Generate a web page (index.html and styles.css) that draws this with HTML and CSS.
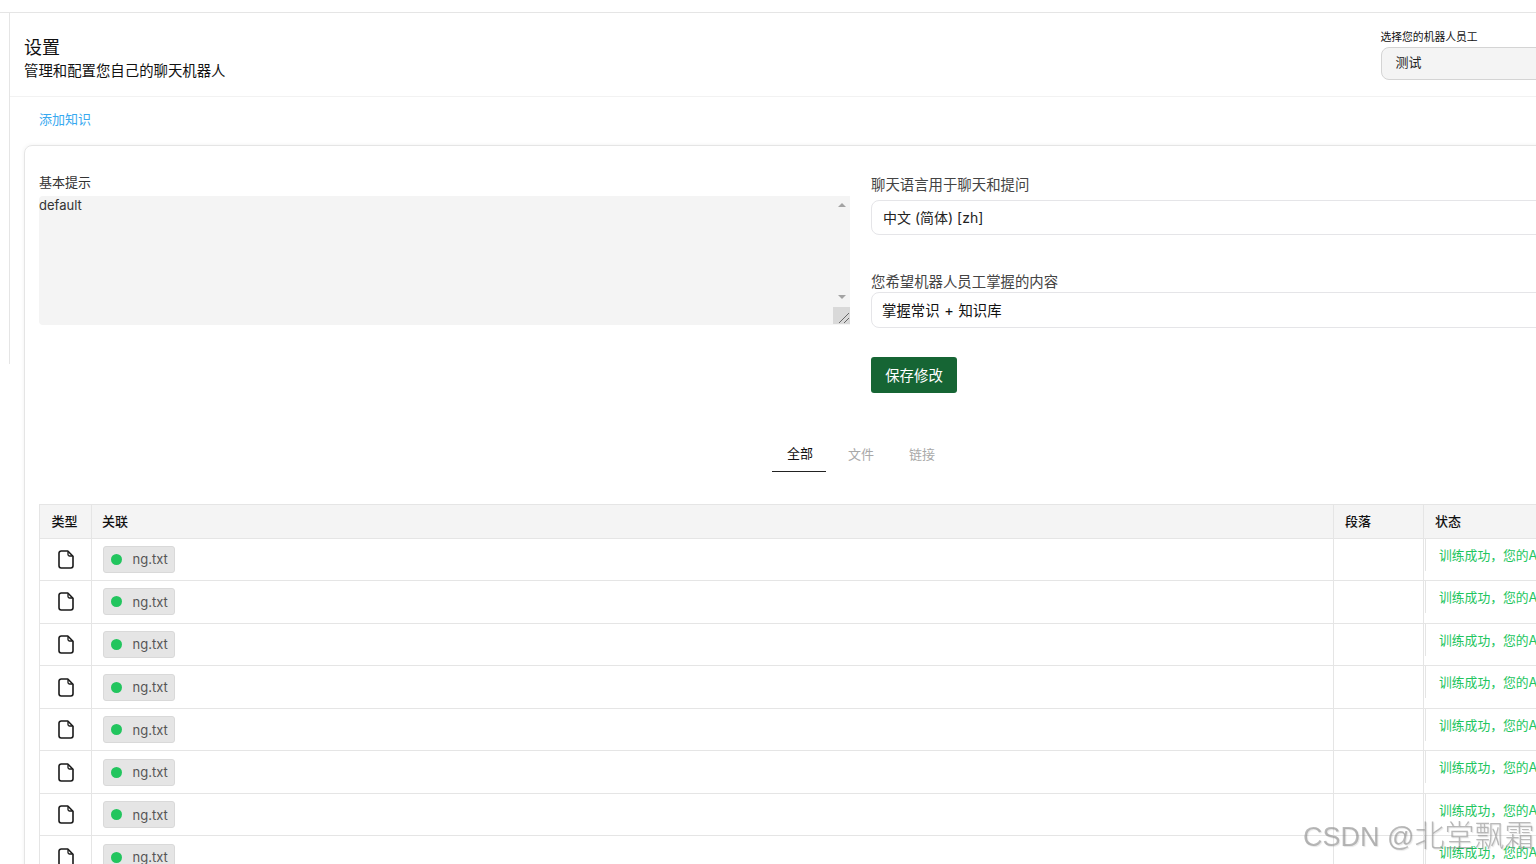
FILE: index.html
```html
<!DOCTYPE html>
<html lang="zh">
<head>
<meta charset="utf-8">
<title>设置</title>
<link rel="stylesheet" href="styles.css">
</head>
<body>
<svg class="defs" width="0" height="0" aria-hidden="true"><defs>
  <symbol id="file-icon" viewBox="0 0 16 19"><path d="M3.2 1H9.8L15 6.2V15.8A2.2 2.2 0 0 1 12.8 18H3.2A2.2 2.2 0 0 1 1 15.8V3.2A2.2 2.2 0 0 1 3.2 1Z" fill="none" stroke="#1a1a1a" stroke-width="1.6" stroke-linejoin="round"/><path d="M10 1.4V4.4A1.6 1.6 0 0 0 11.6 6H14.6" fill="none" stroke="#1a1a1a" stroke-width="1.3"/></symbol>
</defs></svg>
<div class="page">
  <div class="topbar"></div>
  <div class="shell">
    <aside class="rail"></aside>
    <main class="main">
      <header class="head">
        <div class="head-text">
          <h1 class="title">设置</h1>
          <p class="subtitle">管理和配置您自己的聊天机器人</p>
        </div>
        <div class="picker">
          <label class="picker-label">选择您的机器人员工</label>
          <div class="picker-box">测试</div>
        </div>
      </header>
      <nav class="subnav"><a class="subnav-link">添加知识</a></nav>
      <section class="card">
        <div class="form">
          <div class="form-left">
            <label class="label-left">基本提示</label>
            <div class="prompt">
              <span class="prompt-text">default</span>
              <div class="scroll">
                <span class="arrow arrow-up"></span>
                <span class="arrow arrow-down"></span>
                <span class="grip"><svg width="17" height="17" viewBox="0 0 17 17"><path d="M6 16 16 6M11 16l5-5" stroke="#666" stroke-width="1" fill="none"/></svg></span>
              </div>
            </div>
          </div>
          <div class="form-right">
            <label class="label-right">聊天语言用于聊天和提问</label>
            <div class="field field-lang">中文 (简体) [zh]</div>
            <label class="label-right label-second">您希望机器人员工掌握的内容</label>
            <div class="field field-know">掌握常识 + 知识库</div>
            <button class="save">保存修改</button>
          </div>
        </div>
        <div class="tabs">
          <span class="tab tab-active">全部</span>
          <span class="tab">文件</span>
          <span class="tab">链接</span>
        </div>
        <div class="table-wrap">
          <table class="table">
            <colgroup><col class="c-type"><col class="c-link"><col class="c-para"><col class="c-state"></colgroup>
            <thead>
              <tr><th class="th-type">类型</th><th class="th-link">关联</th><th>段落</th><th>状态</th></tr>
            </thead>
            <tbody>
              <tr><td class="td-type"><svg class="file"><use href="#file-icon"/></svg></td><td><span class="badge"><i class="dot"></i>ng.txt</span></td><td></td><td class="td-state"><div class="state">训练成功，您的AI机器人员工已经掌握了这些知识</div></td></tr>
              <tr><td class="td-type"><svg class="file"><use href="#file-icon"/></svg></td><td><span class="badge"><i class="dot"></i>ng.txt</span></td><td></td><td class="td-state"><div class="state">训练成功，您的AI机器人员工已经掌握了这些知识</div></td></tr>
              <tr><td class="td-type"><svg class="file"><use href="#file-icon"/></svg></td><td><span class="badge"><i class="dot"></i>ng.txt</span></td><td></td><td class="td-state"><div class="state">训练成功，您的AI机器人员工已经掌握了这些知识</div></td></tr>
              <tr><td class="td-type"><svg class="file"><use href="#file-icon"/></svg></td><td><span class="badge"><i class="dot"></i>ng.txt</span></td><td></td><td class="td-state"><div class="state">训练成功，您的AI机器人员工已经掌握了这些知识</div></td></tr>
              <tr><td class="td-type"><svg class="file"><use href="#file-icon"/></svg></td><td><span class="badge"><i class="dot"></i>ng.txt</span></td><td></td><td class="td-state"><div class="state">训练成功，您的AI机器人员工已经掌握了这些知识</div></td></tr>
              <tr><td class="td-type"><svg class="file"><use href="#file-icon"/></svg></td><td><span class="badge"><i class="dot"></i>ng.txt</span></td><td></td><td class="td-state"><div class="state">训练成功，您的AI机器人员工已经掌握了这些知识</div></td></tr>
              <tr><td class="td-type"><svg class="file"><use href="#file-icon"/></svg></td><td><span class="badge"><i class="dot"></i>ng.txt</span></td><td></td><td class="td-state"><div class="state">训练成功，您的AI机器人员工已经掌握了这些知识</div></td></tr>
              <tr><td class="td-type"><svg class="file"><use href="#file-icon"/></svg></td><td><span class="badge"><i class="dot"></i>ng.txt</span></td><td></td><td class="td-state"><div class="state">训练成功，您的AI机器人员工已经掌握了这些知识</div></td></tr>
            </tbody>
          </table>
        </div>
      </section>
    </main>
  </div>
  <div class="watermark">CSDN @<span class="wm-name">北堂飘霜</span></div>
</div>
</body>
</html>
```
FILE: styles.css
```css
* { box-sizing: border-box; }
html, body { margin: 0; height: 100%; overflow: hidden; background: #fff; }
body { font-family: Inter, "Noto Sans CJK SC", sans-serif; color: #1f1f1f; }
.defs { position: absolute; }
.page { position: relative; width: 1536px; height: 864px; overflow: hidden; }
.topbar { height: 13px; border-bottom: 1px solid #e5e5e5; }
.shell { display: flex; align-items: flex-start; width: 1900px; }
.rail { flex: 0 0 10px; height: 351px; border-right: 1px solid #e5e5e5; }
.main { flex: 1; min-width: 0; }
.head { display: flex; height: 84px; border-bottom: 1px solid #f2f2f2; padding: 0 0 0 14px; }
.head-text { padding-top: 24px; }
.title { margin: 0; font-size: 18px; line-height: 21px; font-weight: 400; color: #111; }
.subtitle { margin: 3px 0 0; font-size: 14.4px; line-height: 20px; color: #111; }
.picker { margin-left: 1156px; padding-top: 16px; }
.picker-label { display: block; margin-left: -1px; font-size: 10.8px; line-height: 14px; color: #111; padding-top: 2px; }
.picker-box { width: 400px; height: 33px; margin-top: 2px; padding: 0 13px; line-height: 29px; font-size: 13px; color: #222; background: #f4f4f4; border: 1px solid #d4d4d4; border-radius: 8px; }
.subnav { height: 48px; padding: 11px 0 0 29px; }
.subnav-link { font-size: 13px; line-height: 16px; color: #38a9f0; }
.card { margin-left: 14px; border: 1px solid #e5e5e5; border-radius: 8px; padding: 0 14px; box-shadow: 0 0 4px rgba(0,0,0,.06); }
.form { display: grid; grid-template-columns: 811px 1fr; column-gap: 21px; height: 286px; }
.form-left { padding-top: 28px; }
.label-left { display: block; font-size: 13px; line-height: 16px; color: #333; }
.prompt { position: relative; height: 129px; margin-top: 6px; padding-top: 1px; background: #f4f4f4; border-radius: 4px 0 0 4px; overflow: hidden; }
.prompt-text { font-size: 13px; line-height: 16px; color: #333; display: block; }
.scroll { position: absolute; top: 0; right: 0; bottom: 0; width: 17px; }
.arrow { position: absolute; left: 5px; width: 0; height: 0; border-left: 4px solid transparent; border-right: 4px solid transparent; }
.arrow-up { top: 7px; border-bottom: 4px solid #a3a3a3; }
.arrow-down { top: 99px; border-top: 4px solid #a3a3a3; }
.grip { position: absolute; left: 0; bottom: 1px; width: 17px; height: 17px; background: #d9d9d9; display: block; }
.grip svg { display: block; }
.form-right { padding-top: 30px; display: flex; flex-direction: column; align-items: flex-start; }
.label-right { font-size: 14.4px; line-height: 18px; color: #444; }
.label-second { margin-top: 38px; }
.field { width: 100%; border: 1px solid #e5e5e8; border-radius: 8px; padding: 0 11px; color: #222; }
.field-lang { height: 35px; margin-top: 6px; font-size: 14px; line-height: 33px; }
.field-know { height: 36px; margin-top: 1px; padding-left: 10px; font-size: 14.4px; line-height: 36px; color: #111; word-spacing: .6px; }
.save { margin-top: 29px; width: 86px; height: 36px; padding: 2px 0 0; border: 0; border-radius: 3px; background: #166534; color: #fff; font: 14.4px/34px Inter, "Noto Sans CJK SC", sans-serif; }
.tabs { display: flex; padding-left: 733px; height: 33px; margin-top: 7px; }
.tab { width: 54px; margin-right: 7px; padding-left: 2px; text-align: center; font-size: 13px; line-height: 16px; padding-top: 7px; color: #a8a8a8; height: 33px; }
.tab-active { color: #111; padding-top: 6px; border-bottom: 1px solid #222; }
.table-wrap { margin-top: 32px; width: 1900px; }
.table { border-collapse: collapse; table-layout: fixed; width: 1700px; border: 1px solid #e5e5e5; font-size: 13px; }
.c-type { width: 52px; } .c-link { width: 1242px; } .c-para { width: 90px; } .c-state { width: 316px; }
th { height: 33.6px; padding: 0 11px 2px; text-align: left; font-size: 13px; font-weight: 500; color: #111; background: #f4f4f4; border: 1px solid #e5e5e5; }
.table thead th.th-type { padding: 0 2px 2px 0; text-align: center; }
.table thead th.th-link { padding-left: 10px; }
td { height: 42.55px; padding: 0 11px; border: 1px solid #e5e5e5; vertical-align: middle; }
.td-type { padding: 0; text-align: center; }
.file { display: block; width: 16px; height: 19px; margin: 0 auto; }
.badge { display: inline-flex; align-items: center; width: 72px; height: 27px; padding-left: 7px; background: #e5e5e5; border: 1px solid #d9d9d9; border-radius: 3px; color: #555; font-size: 13px; }
.dot { width: 11px; height: 11px; border-radius: 50%; background: #22c55e; margin-right: 10.5px; }
.td-state { padding: 0; vertical-align: top; }
.state { height: 32px; padding: 9px 0 0 13px; border-left: 1px solid #e5e5e5; margin-left: 1px; color: #22c55e; font-size: 12.8px; line-height: 16px; white-space: nowrap; }
.watermark { position: absolute; left: 1303px; top: 818px; font: 27px/36px "Liberation Sans", "Noto Sans CJK SC", sans-serif; color: rgba(140,140,140,.6); white-space: nowrap; filter: blur(.6px); text-shadow: 1px 1px 1px rgba(0,0,0,.1); }
.wm-name { font-size: 30px; font-weight: 300; }
```
